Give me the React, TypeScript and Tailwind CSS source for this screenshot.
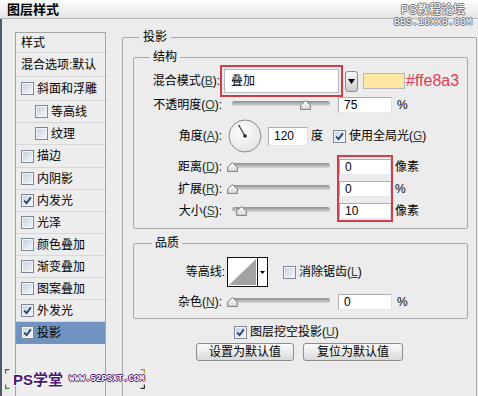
import React from "react";

const sideItems = [
  { label: "样式", h: "h-[20px]", box: false, indent: false, checked: false, selected: false },
  { label: "混合选项:默认", h: "h-[24px]", box: false, indent: false, checked: false, selected: false },
  { label: "斜面和浮雕", h: "h-[24px]", box: true, indent: false, checked: false, selected: false },
  { label: "等高线", h: "h-[22px]", box: true, indent: true, checked: false, selected: false },
  { label: "纹理", h: "h-[22px]", box: true, indent: true, checked: false, selected: false },
  { label: "描边", h: "h-[23px]", box: true, indent: false, checked: false, selected: false },
  { label: "内阴影", h: "h-[22px]", box: true, indent: false, checked: false, selected: false },
  { label: "内发光", h: "h-[22px]", box: true, indent: false, checked: true, selected: false },
  { label: "光泽", h: "h-[22px]", box: true, indent: false, checked: false, selected: false },
  { label: "颜色叠加", h: "h-[22px]", box: true, indent: false, checked: false, selected: false },
  { label: "渐变叠加", h: "h-[22px]", box: true, indent: false, checked: false, selected: false },
  { label: "图案叠加", h: "h-[22px]", box: true, indent: false, checked: false, selected: false },
  { label: "外发光", h: "h-[22px]", box: true, indent: false, checked: true, selected: false },
  { label: "投影", h: "h-[22px]", box: true, indent: false, checked: true, selected: true },
];

function Mn({ k }: { k: string }) {
  return <span className="underline text-[#2f4a3c]">{k}</span>;
}

function Check({ checked }: { checked?: boolean }) {
  return (
    <span className="inline-flex w-[13px] h-[13px] shrink-0 items-center justify-center border border-[#7d8796] bg-linear-to-br from-[#c3cedd] to-[#f7f9fb] shadow-[inset_0_0_0_1px_#f4f6f9]">
      {checked && (
        <svg width="9" height="9" viewBox="0 0 9 9">
          <path d="M1.2 4.6 L3.6 7.2 L7.8 1.4" stroke="#23407a" strokeWidth="1.8" fill="none" />
        </svg>
      )}
    </span>
  );
}

function Slider({ value }: { value: number }) {
  return (
    <div className="relative ml-[10px] w-[98px] h-[16px] shrink-0">
      <div className="mt-[4px] h-[5px] rounded-full bg-linear-to-b from-[#8f8f8f] to-[#d9d9d9]" />
      <svg
        className="absolute top-[3px]"
        style={{ left: value * 0.98 - 5.5 }}
        width="11"
        height="10"
        viewBox="0 0 11 10"
      >
        <defs>
          <linearGradient id="th" x1="0" y1="0" x2="0" y2="1">
            <stop offset="0" stopColor="#ffffff" />
            <stop offset="1" stopColor="#d6d6d6" />
          </linearGradient>
        </defs>
        <path d="M5.5 0.6 L10.4 5 L10.4 9.4 L0.6 9.4 L0.6 5 Z" fill="url(#th)" stroke="#7a7a7a" strokeWidth="1" />
      </svg>
    </div>
  );
}

function Field({ value, w = "w-[54px]", h = "h-[16px]" }: { value: string; w?: string; h?: string }) {
  return (
    <div className={`${w} ${h} shrink-0 flex items-center border border-[#abadb3] border-b-[#e3e9ef] border-r-[#dbdfe6] bg-white pl-[5px] text-[12px] leading-none`}>
      {value}
    </div>
  );
}

function Label({ children, w = "w-[88px]" }: { children: React.ReactNode; w?: string }) {
  return <div className={`${w} shrink-0 text-right whitespace-nowrap`}>{children}</div>;
}

function Dial() {
  return (
    <svg width="34" height="34" viewBox="0 0 34 34" className="ml-[6px] shrink-0">
      <defs>
        <radialGradient id="dg" cx="0.4" cy="0.35" r="0.7">
          <stop offset="0" stopColor="#ffffff" />
          <stop offset="1" stopColor="#e2e2e2" />
        </radialGradient>
      </defs>
      <circle cx="17" cy="17" r="16" fill="url(#dg)" stroke="#8a8a8a" strokeWidth="1" />
      <line x1="17" y1="17" x2="10.5" y2="5.8" stroke="#333" strokeWidth="1.2" />
      <circle cx="17" cy="17" r="1.8" fill="#222" />
    </svg>
  );
}

function Button({ children, w }: { children: React.ReactNode; w: string }) {
  return (
    <div className={`${w} h-[18px] flex items-center justify-center rounded-[3px] border border-[#8b8b8b] bg-linear-to-b from-[#fbfbfb] to-[#dadada] text-[12px] leading-none`}>
      {children}
    </div>
  );
}

export default function App() {
  return (
    <div className="relative w-[478px] h-[396px] overflow-hidden bg-[#ececec] text-[12px] text-black font-[family-name:'Liberation_Sans','Noto_Sans_CJK_SC',sans-serif]">
      {/* title bar */}
      <div className="h-[19px] flex items-center pl-[7px] border-b border-[#b9b9b9] bg-linear-to-b from-[#fdfdfd] to-[#e5e5e5] text-[13px] font-bold leading-none">
        图层样式
      </div>

      <div className="flex h-[377px] border-l-2 border-[#4c5a6b]">
        {/* style list */}
        <div className="ml-[13px] mt-[13px] w-[91px] h-[380px] shrink-0 border border-[#a3a3a3] bg-[#ededed] flex flex-col">
          {sideItems.map((it) => (
            <div
              key={it.label}
              className={`${it.h} shrink-0 flex items-center gap-[3px] border-b ${
                it.selected ? "bg-[#7193c1] border-[#7193c1]" : "border-[#d7d7d7]"
              } ${it.indent ? "pl-[19px]" : it.box ? "pl-[5px]" : "pl-[5px]"} whitespace-nowrap leading-none`}
            >
              {it.box && <Check checked={it.checked} />}
              <span>{it.label}</span>
            </div>
          ))}
        </div>

        {/* drop shadow panel */}
        <fieldset className="ml-[16px] mt-[10px] w-[355px] h-[400px] shrink-0 border border-[#a8a8a8] rounded-[2px]">
          <legend className="ml-[16px] px-[4px] leading-[16px]">投影</legend>

          <fieldset className="mt-[4px] ml-[10px] w-[335px] border border-[#a8a8a8] rounded-[2px] pb-[6px]">
            <legend className="ml-[16px] px-[3px] leading-[16px]">结构</legend>

            {/* blend mode */}
            <div className="flex items-center h-[32px]">
              <Label w="w-[86px]">
                混合模式(<Mn k="B" />):
              </Label>
              <div className="w-[123px] h-[32px] shrink-0 border-2 border-[#d23c48] p-[2px]">
                <div className="h-full flex items-center pl-[6px] bg-white border border-[#b4b8bf]">叠加</div>
              </div>
              <div className="ml-[2px] w-[13px] h-[21px] flex items-center justify-center rounded-[3px] border border-[#8c8c8c] bg-linear-to-b from-[#f8f8f8] to-[#cdcdcd]">
                <svg width="7" height="5" viewBox="0 0 7 5">
                  <path d="M0 0 L7 0 L3.5 5 Z" fill="#000" />
                </svg>
              </div>
              <div className="ml-[5px] w-[42px] h-[16px] bg-[#ffe8a3] border border-[#b9b9b9]" />
              <span className="ml-[1px] text-[16px] leading-none text-[#e23c55]">#ffe8a3</span>
            </div>

            {/* opacity */}
            <div className="flex items-center h-[16px]">
              <Label>
                不透明度(<Mn k="O" />):
              </Label>
              <Slider value={75} />
              <div className="ml-[8px]">
                <Field value="75" />
              </div>
              <span className="ml-[5px]">%</span>
            </div>

            {/* angle */}
            <div className="flex items-center h-[42px] pt-[4px]">
              <Label>
                角度(<Mn k="A" />):
              </Label>
              <Dial />
              <div className="ml-[6px]">
                <Field value="120" w="w-[40px]" h="h-[19px]" />
              </div>
              <span className="ml-[3px]">度</span>
              <span className="ml-[10px] flex items-center gap-[3px]">
                <Check checked />
                <span>
                  使用全局光(<Mn k="G" />)
                </span>
              </span>
            </div>

            {/* distance / spread / size */}
            <div className="flex h-[67px]">
              <div className="flex flex-col pt-[1px]">
                {[
                  { l: "距离", k: "D", v: 0 },
                  { l: "扩展", k: "R", v: 0 },
                  { l: "大小", k: "S", v: 10 },
                ].map((r) => (
                  <div key={r.k} className="flex items-center h-[22px]">
                    <Label>
                      {r.l}(<Mn k={r.k} />):
                    </Label>
                    <Slider value={r.v} />
                  </div>
                ))}
              </div>
              <div className="ml-[7px] w-[56px] h-[67px] border-2 border-[#d23c48] pt-[2px] flex flex-col gap-[6px]">
                <Field value="0" w="w-[52px]" />
                <Field value="0" w="w-[52px]" />
                <Field value="10" w="w-[52px]" />
              </div>
              <div className="ml-[2px] flex flex-col pt-[1px]">
                <div className="h-[22px] flex items-center">像素</div>
                <div className="h-[22px] flex items-center">%</div>
                <div className="h-[22px] flex items-center">像素</div>
              </div>
            </div>
          </fieldset>

          <fieldset className="mt-[6px] ml-[10px] w-[335px] border border-[#a8a8a8] rounded-[2px] pb-[8px]">
            <legend className="ml-[18px] px-[3px] leading-[16px]">品质</legend>

            <div className="flex items-center mt-[6px] h-[30px]">
              <Label w="w-[91px]">等高线:</Label>
              <div className="ml-[2px] w-[41px] h-[30px] flex border border-[#111] bg-white">
                <svg width="29" height="28" viewBox="0 0 29 28" className="shrink-0">
                  <path d="M1 27 L28 1 L28 27 Z" fill="#a3a3a3" />
                </svg>
                <div className="flex-1 flex items-center justify-center border-l border-[#111]">
                  <svg width="5" height="3" viewBox="0 0 5 3">
                    <path d="M0 0 L5 0 L2.5 3 Z" fill="#000" />
                  </svg>
                </div>
              </div>
              <span className="ml-[15px] flex items-center gap-[3px]">
                <Check />
                <span>
                  消除锯齿(<Mn k="L" />)
                </span>
              </span>
            </div>

            <div className="flex items-center mt-[7px] h-[16px]">
              <Label>
                杂色(<Mn k="N" />):
              </Label>
              <Slider value={0} />
              <div className="ml-[8px]">
                <Field value="0" />
              </div>
              <span className="ml-[5px]">%</span>
            </div>
          </fieldset>

          <div className="mt-[5px] ml-[111px] h-[16px] flex items-center gap-[3px]">
            <Check checked />
            <span>
              图层挖空投影(<Mn k="U" />)
            </span>
          </div>

          <div className="mt-[3px] flex justify-center gap-[9px]">
            <Button w="w-[98px]">设置为默认值</Button>
            <Button w="w-[100px]">复位为默认值</Button>
          </div>
        </fieldset>
      </div>

      {/* watermark top right */}
      <div className="absolute right-[6px] top-[4px] flex flex-col items-end leading-none text-white [text-shadow:1px_0_#6f6f6f,-1px_0_#6f6f6f,0_1px_#6f6f6f,0_-1px_#6f6f6f]">
        <span className="text-[12px] mr-[7px]">PS教程论坛</span>
        <span className="mt-[2px] text-[10px] font-[family-name:'Liberation_Mono',monospace]">BBS.16XX8.COM</span>
      </div>

      {/* watermark bottom left */}
      <div className="absolute left-[5px] top-[369px] w-[140px] h-[20px] flex items-center">
        <svg className="absolute left-0 top-0" width="5" height="5" viewBox="0 0 5 5">
          <path d="M0.5 4.5 V0.5 H4.5" stroke="#6b5a2a" strokeWidth="1.5" fill="none" />
        </svg>
        <svg className="absolute left-0 bottom-0" width="5" height="5" viewBox="0 0 5 5">
          <path d="M0.5 0.5 V4.5 H4.5" stroke="#3a8a3a" strokeWidth="1.5" fill="none" />
        </svg>
        <svg className="absolute right-0 top-0" width="5" height="5" viewBox="0 0 5 5">
          <path d="M0.5 0.5 H4.5 V4.5" stroke="#b3a12a" strokeWidth="1.5" fill="none" />
        </svg>
        <svg className="absolute right-0 bottom-0" width="5" height="5" viewBox="0 0 5 5">
          <path d="M0.5 4.5 H4.5 V0.5" stroke="#333" strokeWidth="1.5" fill="none" />
        </svg>
        <span className="ml-[8px] text-[15px] font-bold leading-none text-[#4b1670] [text-shadow:1px_0_#fff,-1px_0_#fff,0_1px_#fff,0_-1px_#fff]">
          PS学堂
        </span>
        <span className="ml-[6px] text-[9px] font-bold leading-none text-white font-[family-name:'Liberation_Mono',monospace] [text-shadow:1px_0_#4b1670,-1px_0_#4b1670,0_1px_#4b1670,0_-1px_#4b1670]">
          WWW.52PSXT.COM
        </span>
      </div>
    </div>
  );
}
